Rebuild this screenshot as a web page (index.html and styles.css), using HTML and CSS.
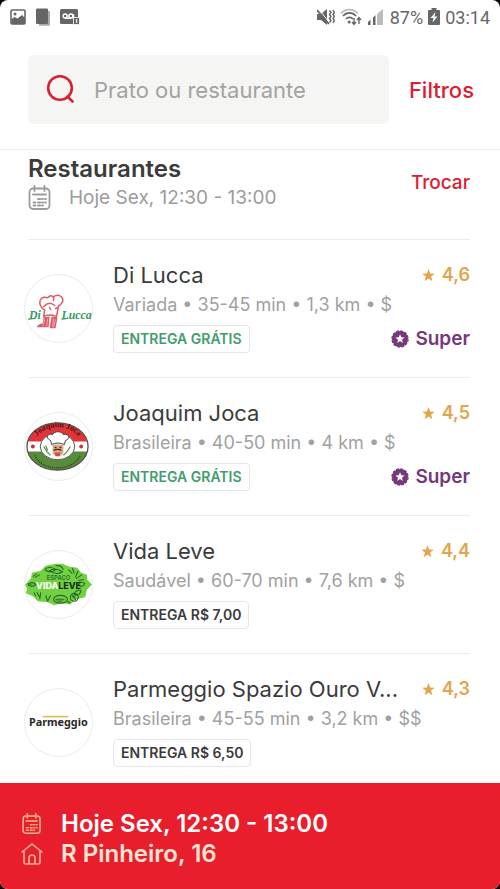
FILE: index.html
```html
<!DOCTYPE html>
<html lang="pt-BR">
<head>
<meta charset="utf-8">
<meta name="viewport" content="width=device-width, initial-scale=1">
<title>Restaurantes</title>
<link rel="stylesheet" href="styles.css">
</head>
<body>
<svg class="defs" aria-hidden="true">
  <symbol id="calendar" viewBox="0 0 24 26">
    <g fill="none" stroke="currentColor" stroke-width="1.8" stroke-linecap="round">
      <rect x="1.5" y="3.5" width="20" height="20.5" rx="3.5"/>
      <path d="M6.500 1v5M16.500 1v5M5 9.500h13"/>
      <path d="M10 14h2.200M14 14h1M17 14h1M5.500 17.500h2M10 17.500h2.200M14 17.500h1M17 17.500h1M5.500 20.500h2M10 20.500h2.200M14 20.500h1"/>
    </g>
  </symbol>
  <symbol id="star" viewBox="0 0 12 12">
    <path fill="currentColor" d="M6 0L7.500 4.100 11.800 4.300 8.400 7 9.600 11.200 6 8.800 2.400 11.200 3.600 7 .2 4.300 4.500 4.100z"/>
  </symbol>
  <symbol id="super" viewBox="0 0 18 18">
    <circle cx="9" cy="9" r="8" fill="currentColor"/>
    <circle cx="9" cy="9" r="8.100" fill="none" stroke="currentColor" stroke-width="1.200" stroke-dasharray="2.900 1.341"/>
    <path fill="#fff" d="M9 4.200L10.300 7.300 13.600 7.500 11 9.700 11.800 12.900 9 11.100 6.200 12.900 7 9.700 4.400 7.500 7.700 7.300z"/>
  </symbol>
</svg>

<div class="status">
  <div class="status-group">
    <svg width="16" height="16" viewBox="0 0 16 16"><rect x="1" y="1" width="14" height="14" rx="1" fill="none" stroke="#666" stroke-width="1.600"/><circle cx="5" cy="5" r="1.500" fill="#666"/><path fill="#666" d="M1.500 10l3-2 3 1.500L12 6l3 3v6H1.500z"/></svg>
    <svg width="16" height="18" viewBox="0 0 16 18"><path fill="#aaa" d="M4 3h11v13.500a1.200 1.200 0 0 1-1 1.200H4z"/><rect x="1" y=".5" width="12" height="15.500" rx="1.300" fill="#666"/></svg>
    <svg width="20" height="16" viewBox="0 0 20 16"><rect width="18" height="15" rx="1.500" fill="#666"/><g fill="none" stroke="#fff" stroke-width="1.500"><circle cx="5.200" cy="7" r="2"/><circle cx="11" cy="7" r="2"/><path d="M5 9.200h6M13.500 5.500V10"/></g><path fill="#666" stroke="#fff" stroke-width=".8" d="M13.500 8.500h6v7h-6z"/><path d="M15.700 11l1-.7V14" fill="none" stroke="#fff"/></svg>
  </div>
  <div class="status-group">
    <svg width="18" height="18" viewBox="0 0 18 18"><path fill="#666" d="M0 6h4l6-5v16l-6-5H0z"/><path d="M2 1.500l11 14" stroke="#fff" stroke-width="1"/><path d="M0 2l12 14" stroke="#666" stroke-width="1.800"/><path d="M12.500 2.500l1.500 2-1.500 2 1.500 2-1.500 2 1.500 2-1.500 2M16 2l1.300 2.500L16 6.500l1.300 2-1.300 2 1.300 2L16 15" fill="none" stroke="#666" stroke-width="1.400"/></svg>
    <svg width="22" height="18" viewBox="0 0 22 18"><g fill="none" stroke="#666" stroke-width="1.700"><path d="M1 5.500C5 .2 13.500.2 18 5.500" stroke="#bbb"/><path d="M3 8c3.500-4.200 9.500-4.200 13 0M6 11c2-2.300 5-2.300 7 0"/></g><circle cx="9.200" cy="14" r="1.500" fill="#666"/><path d="M14 10v6M12 14l2 2.500 2-2.500M19 16v-6M17 12l2-2.500 2 2.500" fill="none" stroke="#666" stroke-width="1.400"/></svg>
    <svg width="18" height="18" viewBox="0 0 18 18"><path fill="#666" d="M1 17v-3l2.500-2.500V17zM6 17V9.500L8.500 7v10z"/><path fill="#bbb" d="M10 17V6l6-5v16z"/></svg>
    <span>87%</span>
    <svg width="12" height="18" viewBox="0 0 12 18"><path fill="#666" d="M3.500 0h5v2H11q1 0 1 1v13q0 1-1 1H1q-1 0-1-1V3q0-1 1-1h2.500z"/><path fill="#fff" d="M7.500 4L2.500 10H5.500l-1 4.500L9.500 8.500H6.500z"/></svg>
    <span>03:14</span>
  </div>
</div>

<header class="header">
  <label class="search">
    <svg width="30" height="30" viewBox="0 0 30 30" aria-hidden="true"><g fill="none" stroke="#d92231" stroke-width="2.600" stroke-linecap="round"><circle cx="14" cy="13" r="11.800"/><path d="M21.500 21.500l5 5"/></g></svg>
    <input type="search" placeholder="Prato ou restaurante" aria-label="Prato ou restaurante">
  </label>
  <button class="link">Filtros</button>
</header>

<main class="content">
  <section class="heading">
    <div>
      <h1>Restaurantes</h1>
      <p class="when"><svg width="24" height="26" aria-hidden="true"><use href="#calendar"/></svg>Hoje Sex, 12:30 - 13:00</p>
    </div>
    <button class="link small">Trocar</button>
  </section>

  <ul class="list">
    <li class="row">
      <svg class="logo" viewBox="0 0 68 68" role="img" aria-label="Di Lucca">
        <g fill="none" stroke="#dc5b65" stroke-width="1.500" stroke-linecap="round">
          <path d="M19 35c-7-6-4-14 4-12 4-4 7-1 6 3M29 22c6-4 12 2 8 7l-2 2M19 32c4-4 8-4 11-1M20 35l-1 7c4-2 8-2 13 0l2-11M25 33l1 2M31 34l3-1"/>
        </g>
        <path fill="#dc5b65" d="M19 43l6-1-1 11H12q1-3 6-4zM27 42l6 1-2 11h-6z"/>
        <path d="M20 45l-2 7M23 44l-1 8M29 44l-1 9M31 45l-2 8" stroke="#f6c9cb" stroke-width=".7"/>
        <text x="4" y="45" class="script">Di</text>
        <text x="37" y="45" class="script">Lucca</text>
        <path d="M3 45l8-1M37 45l7-1" stroke="#369967"/>
      </svg>
      <div class="info">
        <div class="line"><h2>Di Lucca</h2><span class="rating"><svg width="13" height="13"><use href="#star"/></svg>4,6</span></div>
        <p class="meta">Variada • 35-45 min • 1,3 km • $</p>
        <div class="line"><span class="tag free">ENTREGA GRÁTIS</span><span class="super"><svg width="18" height="18"><use href="#super"/></svg>Super</span></div>
      </div>
    </li>
    <li class="row">
      <svg class="logo" viewBox="0 0 68 68" role="img" aria-label="Joaquim Joca">
        <defs>
          <clipPath id="oval"><ellipse cx="33" cy="34" rx="31" ry="24"/></clipPath>
          <path id="arc-top" d="M9 31C13 9 53 9 57 31"/>
        </defs>
        <g clip-path="url(#oval)"><path fill="#e43338" d="M0 8h68v22H0z"/><path fill="#fff" d="M0 29h68v11H0z"/><path fill="#578c3b" d="M0 39h68v22H0z"/></g>
        <ellipse cx="33" cy="34" rx="31" ry="24" fill="none" stroke="#575246" stroke-width="1.300"/>
        <ellipse cx="33" cy="34" rx="17.500" ry="13.500" fill="#fff" stroke="#575246"/>
        <text class="oval-name"><textPath href="#arc-top" startOffset="50%" text-anchor="middle">Joaquim Joca</textPath></text>
        <path d="M10 43C17 60 49 60 56 43" fill="none" stroke="#294920" stroke-width="1.600" stroke-dasharray="1 1"/>
        <circle cx="8" cy="34" r="2" fill="#c53534"/><circle cx="57" cy="34" r="2" fill="#c53534"/>
        <path fill="#e1aa86" d="M28 32h11v9q-5 6-11 0z"/>
        <path fill="#fff" stroke="#40464a" d="M27 32l-1-4c-6-3-3-8 2-6 2-4 9-4 11 0 5-2 8 4 2 6l-1 4c-4-2-9-2-13 0z"/>
        <path fill="none" stroke="#4a2a20" stroke-width="1.300" d="M29 38q4-2 8 0M30 35h2M35 35h2"/>
        <path fill="#cc4f43" d="M30 40h6l-1 4h-4z"/>
        <path fill="none" stroke="#5c9654" stroke-width="1.300" d="M19 34l3 5 4 4M46 34l-3 5-4 4M21 33l2 5"/>
      </svg>
      <div class="info">
        <div class="line"><h2>Joaquim Joca</h2><span class="rating"><svg width="13" height="13"><use href="#star"/></svg>4,5</span></div>
        <p class="meta">Brasileira • 40-50 min • 4 km • $</p>
        <div class="line"><span class="tag free">ENTREGA GRÁTIS</span><span class="super"><svg width="18" height="18"><use href="#super"/></svg>Super</span></div>
      </div>
    </li>
    <li class="row">
      <svg class="logo" viewBox="0 0 68 68" role="img" aria-label="Espaço Vida Leve">
        <path fill="#72d141" d="M0 34l6-6 1-6 9-2 5-5 10-2 7 0 7 3 8 1 4 5 6 2v5l5 5-5 5-2 8-9 2-6 5-9-1-7 2-7-3-10-1-5-5-7-3 1-5z"/>
        <g fill="none" stroke="#28672f" stroke-width="1.100">
          <path d="M3 34q4-4 8 0-4 4-8 0M20 19q5-5 11 0-5 4-11 0M25 20q5-4 13 1-6 4-13-1M31 15q6-1 8 4M8 26l4-3M10 27l5-3M44 19l4 4M48 17l2 6M54 20l-3 7M58 24l-6 4M60 29l-6 1M61 33q-5-3-7 1 4 4 7-1"/>
          <path d="M12 42l3 5M16 42l-1 7M21 45l2 6M26 45l-3 6M9 42l2 4"/>
          <ellipse cx="36" cy="49" rx="7" ry="4"/><circle cx="50" cy="47" r="4"/><path d="M31 49h9M47 44l5 6M57 40q-6-1-7 4 6 2 7-4M43 51l3 2"/>
        </g>
        <path fill="#28672f" opacity=".6" d="M21 20h5l-2 2zM47 45h5l-2 4zM31 50h8l-3 3zM3 33h6l-3 2z"/>
        <text x="22" y="29" class="leaf-small">ESPAÇO</text>
        <text x="34" y="39" class="leaf-name" text-anchor="middle"><tspan fill="#fff">VIDA</tspan><tspan fill="#17341b">LEVE</tspan></text>
      </svg>
      <div class="info">
        <div class="line"><h2>Vida Leve</h2><span class="rating"><svg width="13" height="13"><use href="#star"/></svg>4,4</span></div>
        <p class="meta">Saudável • 60-70 min • 7,6 km • $</p>
        <div class="line"><span class="tag">ENTREGA R$ 7,00</span></div>
      </div>
    </li>
    <li class="row">
      <svg class="logo" viewBox="0 0 68 68" role="img" aria-label="Parmeggio">
        <path d="M18 28h26" stroke="#dfb84c" stroke-width="1.600"/>
        <text x="4" y="38" class="parm">Parmeggio</text>
      </svg>
      <div class="info">
        <div class="line"><h2>Parmeggio Spazio Ouro V...</h2><span class="rating"><svg width="13" height="13"><use href="#star"/></svg>4,3</span></div>
        <p class="meta">Brasileira • 45-55 min • 3,2 km • $$</p>
        <div class="line"><span class="tag">ENTREGA R$ 6,50</span></div>
      </div>
    </li>
  </ul>
</main>

<footer class="order">
  <p><svg width="22" height="22" aria-hidden="true"><use href="#calendar"/></svg>Hoje Sex, 12:30 - 13:00</p>
  <p class="address"><svg width="22" height="22" viewBox="0 0 22 22" aria-hidden="true"><path fill="none" stroke="currentColor" stroke-width="1.600" stroke-linecap="round" stroke-linejoin="round" d="M1 9L11 1l10 8M3 8v11q0 2 2 2h12q2 0 2-2V8M8 21v-6q0-3 3-3t3 3v6"/></svg>R Pinheiro, 16</p>
</footer>
</body>
</html>
```
FILE: styles.css
```css
* {
  box-sizing: border-box;
}

html {
  background: #000;
}

body {
  display: flex;
  flex-direction: column;
  height: 100vh;
  margin: 0;
  overflow: hidden;
  border-radius: 8px;
  background: #fff;
  color: #3b3b3b;
  font-family: Inter, "Liberation Sans", sans-serif;
}

h1,
h2,
p,
ul {
  margin: 0;
  padding: 0;
}

.defs {
  display: none;
}

.status {
  display: flex;
  flex: none;
  justify-content: space-between;
  height: 34px;
  padding: 0 10px;
  color: #666;
  font-family: Roboto, sans-serif;
  font-size: 18px;
}

.status-group {
  display: flex;
  align-items: center;
  gap: 5px;
}

.status-group:first-child {
  gap: 9px;
}

.header {
  display: flex;
  flex: none;
  align-items: center;
  gap: 20px;
  padding: 21px 26px 25px 28px;
  border-bottom: 1px solid #ececec;
}

.search {
  display: flex;
  flex: 1;
  align-items: center;
  gap: 18px;
  min-width: 0;
  height: 69px;
  padding: 0 18px;
  border-radius: 6px;
  background: #f5f5f3;
}

.search svg {
  flex: none;
}

.search input {
  width: 100%;
  min-width: 0;
  padding: 0;
  border: 0;
  outline: 0;
  background: none;
  font: 400 22px/28px Inter, sans-serif;
}

.search input::placeholder {
  color: #a3a3a0;
  opacity: 1;
}

.link {
  padding: 0;
  border: 0;
  background: none;
  color: #dc2034;
  font: 500 22px/28px Inter, sans-serif;
}

.link.small {
  font-size: 19px;
}

.content {
  flex: 1;
  min-height: 0;
  padding: 0 30px 0 24px;
  overflow: hidden;
}

.heading {
  display: flex;
  align-items: center;
  justify-content: space-between;
  height: 89px;
  margin-left: 4px;
  padding-bottom: 23px;
}

h1 {
  font-size: 24px;
  font-weight: 600;
  line-height: 30px;
}

.when {
  display: flex;
  align-items: center;
  gap: 17px;
  color: #9b9b9b;
  font-size: 19px;
  line-height: 28px;
}

.list {
  list-style: none;
}

.row {
  display: flex;
  gap: 20px;
  height: 138px;
  padding-top: 20px;
  background: linear-gradient(#ececec, #ececec) 4px 0 / 100% 1px no-repeat;
}

.logo {
  flex: none;
  width: 69px;
  height: 69px;
  margin-top: 15px;
  border: 1px solid #ebebeb;
  border-radius: 50%;
  overflow: visible;
}

.info {
  flex: 1;
  min-width: 0;
}

.line {
  display: flex;
  align-items: center;
  justify-content: space-between;
}

h2 {
  font-size: 22px;
  font-weight: 400;
  line-height: 32px;
  white-space: nowrap;
}

.rating,
.super {
  display: flex;
  align-items: center;
  gap: 7px;
  color: #e4a44c;
  font-size: 18px;
  font-weight: 600;
  line-height: 28px;
}

.super {
  gap: 6px;
  color: #77377b;
  font-size: 19px;
}

.meta {
  margin-bottom: 6px;
  color: #a1a1a1;
  font-size: 18px;
  line-height: 28px;
  white-space: nowrap;
}

.tag {
  padding: 0 7px;
  border: 1px solid #e6e6e6;
  border-radius: 4px;
  font-size: 14px;
  font-weight: 600;
  line-height: 26px;
}

.tag.free {
  color: #429c6c;
}

.script {
  fill: #369967;
  font: italic 700 12px "Liberation Serif", serif;
}

.oval-name {
  fill: #4b1716;
  font: 700 8px "Liberation Serif", serif;
}

.leaf-small {
  fill: #2b702f;
  font: 600 6px Inter, sans-serif;
}

.leaf-name {
  font: 800 9px Inter, sans-serif;
}

.parm {
  fill: #292929;
  font: 700 11px "Noto Sans", sans-serif;
}

.order {
  flex: none;
  padding: 26px 21px 20px;
  background: #e91e2d;
  color: #fff;
  font-size: 24px;
  font-weight: 600;
  line-height: 30px;
}

.order p {
  display: flex;
  align-items: center;
  gap: 18px;
}

.order svg {
  flex: none;
  color: #f9b58b;
}

.address {
  color: #ffe4d2;
}
```
